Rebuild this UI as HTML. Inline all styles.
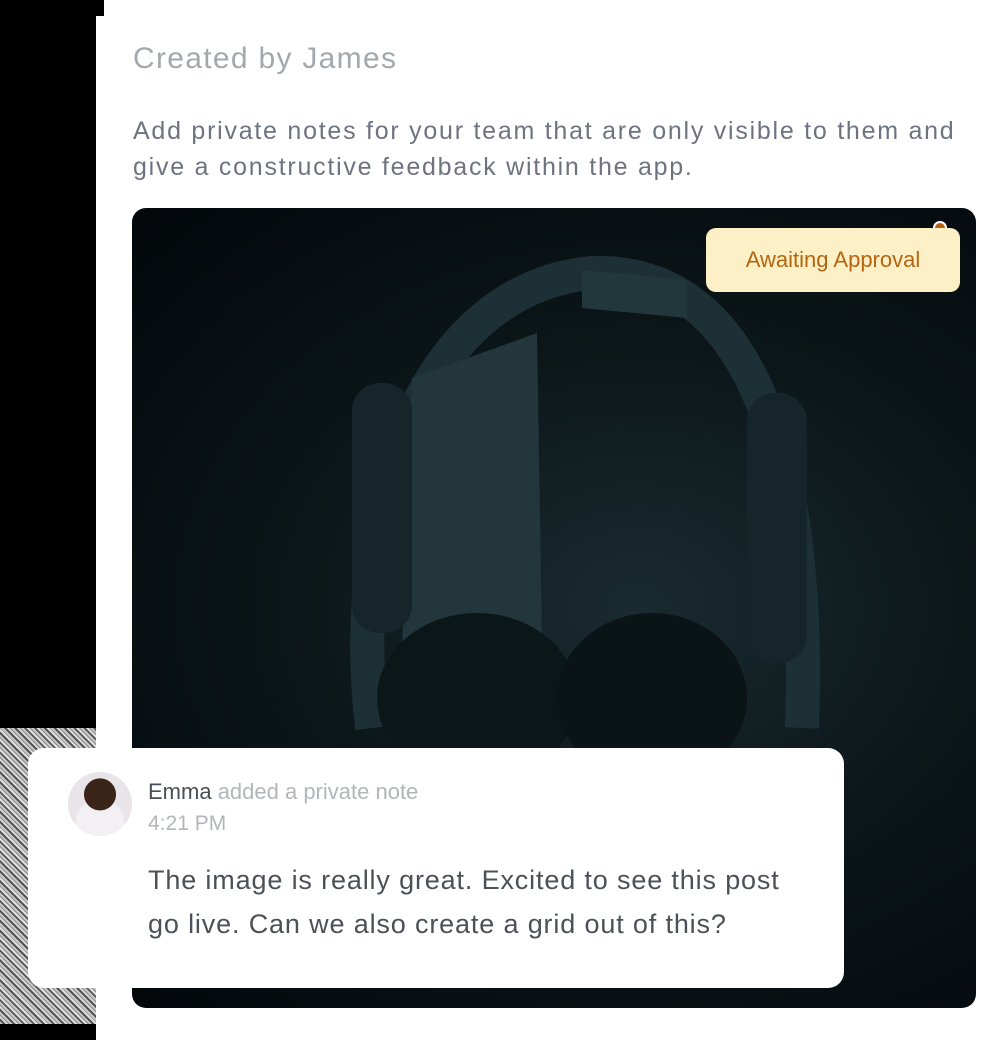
<!DOCTYPE html>
<html><head><style>
html,body{margin:0;padding:0;width:1008px;height:1040px;overflow:hidden;background:#000;font-family:"Liberation Sans",sans-serif}
.panel{position:absolute;left:96px;top:16px;right:0;bottom:0;background:#fff}
.cap{position:absolute;left:104px;top:0;right:0;height:16px;background:#fff}
.noise{position:absolute;left:0;top:728px;width:102px;height:296px;background:repeating-linear-gradient(45deg,#c8c8c8 0 2px,#555 2px 4px,#e0e0e0 4px 6px,#888 6px 7px)}
h1{position:absolute;left:133px;top:42px;margin:0;font-weight:400;font-size:30px;color:#a4a7ae;letter-spacing:1.3px}
p.d{position:absolute;left:133px;top:113px;margin:0;font-size:25px;line-height:36px;color:#6e7380;width:860px;letter-spacing:1.75px;white-space:nowrap}
.img{position:absolute;left:132px;top:208px;width:844px;height:800px;border-radius:14px;overflow:hidden;background:radial-gradient(ellipse at 60% 50%,#1a2b30 0%,#0c171a 45%,#03070a 100%)}
.badge{position:absolute;left:706px;top:228px;width:254px;height:64px;border-radius:10px;background:#fdf0c6;color:#b5650f;font-size:22px;line-height:64px;text-align:center}
.dot{position:absolute;left:933px;top:221px;width:10px;height:10px;border-radius:50%;background:#b5620f;border:2px solid #fff}
.card{position:absolute;left:28px;top:748px;width:816px;height:240px;background:#fff;border-radius:16px}
.av{position:absolute;left:68px;top:772px;width:64px;height:64px;border-radius:50%;background:radial-gradient(circle at 50% 35%,#3a2418 0 30%,transparent 31%),radial-gradient(circle at 50% 80%,#f3f0f3 0 40%,#e8e4e8 41%)}
.nm{position:absolute;left:148px;top:779px;font-size:22px;color:#4a4d55}
.nm span{color:#b3b5ba}
.tm{position:absolute;left:148px;top:812px;font-size:21px;color:#b3b5ba}
.msg{position:absolute;left:148px;top:858px;font-size:27px;line-height:44px;color:#4d5058;width:690px;letter-spacing:0.85px;white-space:nowrap}
</style></head><body>
<div class="noise"></div>
<div class="cap"></div><div class="panel"></div>
<h1>Created by James</h1>
<p class="d">Add private notes for your team that are only visible to them and<br>give a constructive feedback within the app.</p>
<div class="img">
<svg width="844" height="800" viewBox="0 0 844 800">
<path d="M240 520 C215 300 290 80 460 65 C610 60 680 230 670 520" fill="none" stroke="#1d3035" stroke-width="34"/>
<path d="M450 62 L555 72 L555 110 L450 100 Z" fill="#22373c"/>
<path d="M280 170 L405 125 L410 430 L270 440 Z" fill="#22363b"/>
<rect x="220" y="175" width="60" height="250" rx="28" fill="#15252a"/>
<rect x="615" y="185" width="60" height="270" rx="28" fill="#15252a"/>
<ellipse cx="345" cy="490" rx="100" ry="85" fill="#0b1619"/>
<ellipse cx="520" cy="490" rx="95" ry="85" fill="#0a1417"/>
</svg>
</div>
<div class="dot"></div>
<div class="badge">Awaiting Approval</div>
<div class="card"></div>
<div class="av"></div>
<div class="nm">Emma <span>added a private note</span></div>
<div class="tm">4:21 PM</div>
<div class="msg">The image is really great. Excited to see this post<br>go live. Can we also create a grid out of this?</div>
</body></html>
